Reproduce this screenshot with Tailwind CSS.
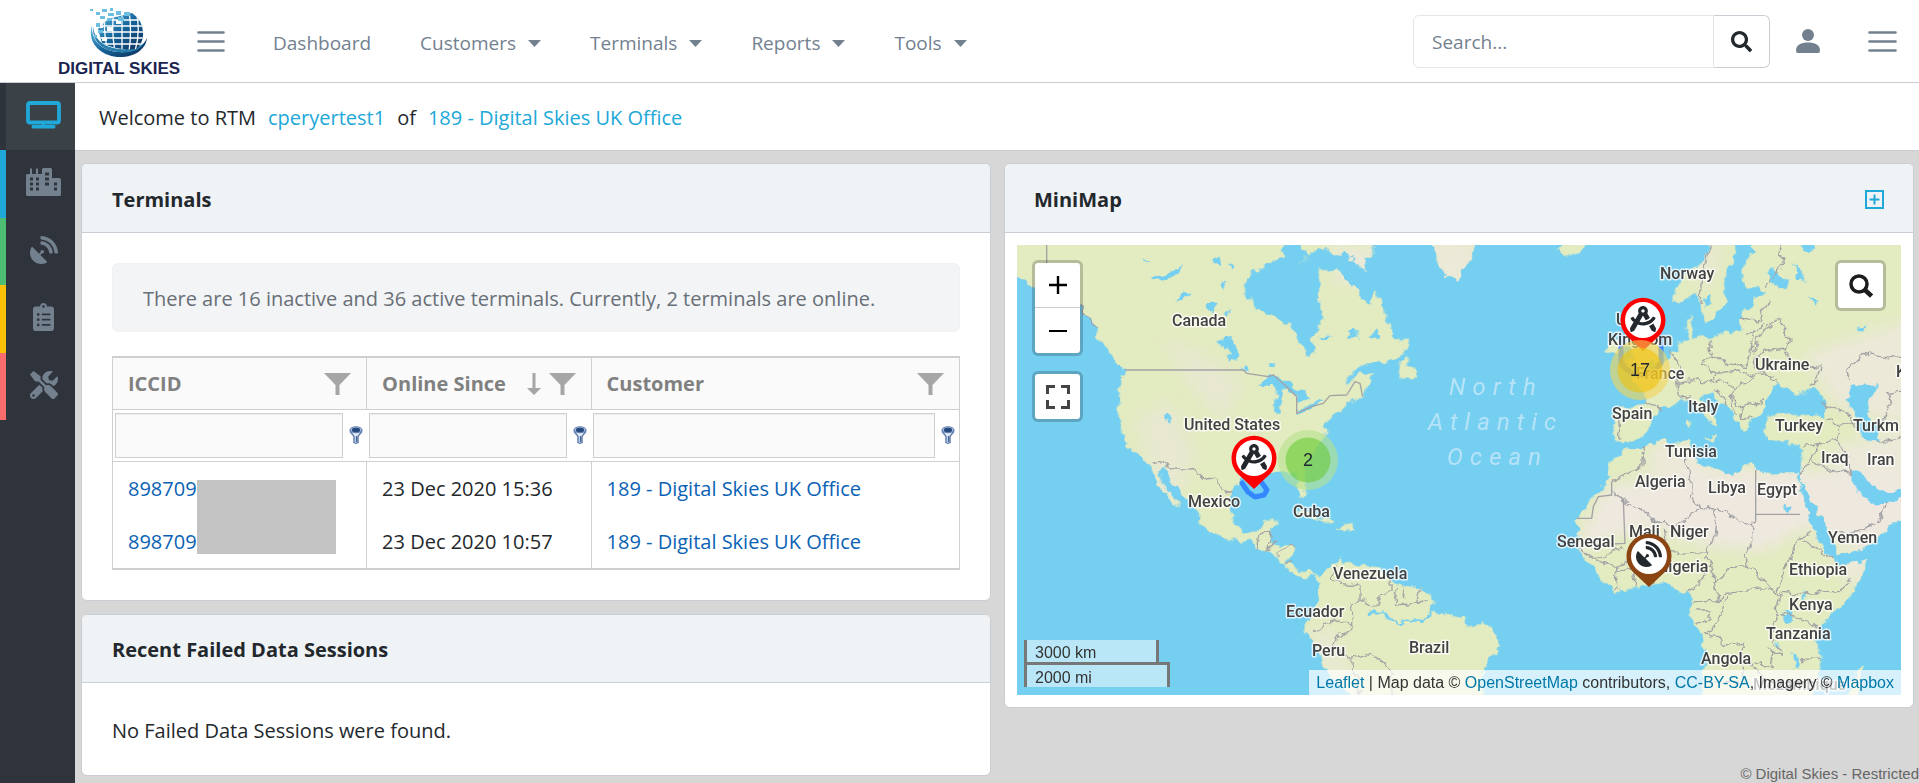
<!DOCTYPE html>
<html lang="en">
<head>
<meta charset="utf-8">
<title>Digital Skies RTM</title>
<script src="https://cdn.jsdelivr.net/npm/@tailwindcss/browser@4"></script>
</head>
<body class="flex h-screen flex-col overflow-hidden bg-[#d7d7d7] font-['Open_Sans','Noto_Sans',sans-serif] text-[20px] leading-[30px] text-[#23282c]">

<svg class="hidden" aria-hidden="true">
  <symbol id="i-search" viewBox="0 0 512 512"><path d="M505 442.7L405.3 343c-4.500-4.500-10.600-7-17-7H372c27.600-35.300 44-79.700 44-128C416 93.100 322.900 0 208 0S0 93.100 0 208s93.100 208 208 208c48.300 0 92.700-16.400 128-44v16.300c0 6.400 2.500 12.500 7 17l99.700 99.700c9.400 9.400 24.600 9.400 33.900 0l28.300-28.300c9.400-9.400 9.400-24.600.1-34zM208 336c-70.700 0-128-57.200-128-128 0-70.700 57.200-128 128-128 70.700 0 128 57.200 128 128 0 70.700-57.200 128-128 128z"/></symbol>
  <symbol id="i-dish" viewBox="0 0 512 512"><path d="M305.450,462.590c7.390,7.300,6.190,20.100-3,25-77.710,41.800-176.720,29.910-242.340-35.710C-5.500,386.280-17.400,287.360,24.410,209.550c4.890-9.100,17.690-10.300,25-3L166.230,323.370l27.390-27.390c-.69-2.610-1.590-5-1.590-7.820a32,32,0,1,1,32,32.010c-2.800,0-5.200-.89-7.800-1.600l-27.410,27.410ZM511.980,303.070a16.100,16.100,0,0,1-16,17H463.860a15.970,15.970,0,0,1-15.890-15C440.470,175.550,336.450,70.530,207.030,63.530a15.840,15.840,0,0,1-15-15.910V16.030A16.090,16.090,0,0,1,209.030.020C372.250,8.620,503.470,139.840,511.980,303.070Zm-96.020-.3a16.210,16.210,0,0,1-16.110,17.300H367.640a16.070,16.070,0,0,1-15.890-14.700c-6.910-77.010-68.120-138.910-144.920-145.220a15.940,15.940,0,0,1-14.800-15.900V112.130a16.130,16.130,0,0,1,17.300-16.090C319.450,104.540,407.560,192.650,415.960,302.770Z"/></symbol>
  <symbol id="i-compass" viewBox="0 0 512 512"><path d="M457.010 344.420c-25.050 20.330-52.630 37.180-82.540 49.050l54.380 94.190 53.950 23.040c9.810 4.190 20.890-2.210 22.170-12.800l7.020-58.250-54.980-95.230zm42.490-94.560c4.860-7.670 1.890-17.990-6.050-22.390l-28.070-15.570c-7.480-4.150-16.610-1.460-21.260 5.720C403.010 281.150 332.250 320 256 320c-23.930 0-47.230-4.250-69.410-11.530l67.360-116.680c.7.020 1.340.21 2.040.21s1.350-.19 2.040-.21l51.090 88.500c31.230-8.960 59.560-25.750 82.610-48.920l-51.790-89.710C347.390 128.030 352 112.630 352 96c0-53.020-42.980-96-96-96s-96 42.980-96 96c0 16.630 4.610 32.030 12.050 45.660l-68.300 118.310c-12.550-11.610-23.960-24.590-33.680-39-4.790-7.100-13.970-9.620-21.380-5.330l-27.750 16.070c-7.850 4.540-10.630 14.900-5.640 22.470 15.570 23.640 34.690 44.210 55.980 62.020L0 439.660l7.020 58.250c1.280 10.590 12.360 16.990 22.170 12.800l53.950-23.040 70.800-122.630C186.130 377.280 220.620 384 256 384c99.050 0 190.880-51.010 243.500-134.140zM256 64c17.670 0 32 14.330 32 32s-14.330 32-32 32-32-14.330-32-32 14.330-32 32-32z"/></symbol>
  <symbol id="i-funnel" viewBox="0 0 27 22"><path fill="#a6a6a6" d="M0 0H27L15.500 12V22H11.500V12Z"/></symbol>
  <symbol id="i-filter" viewBox="0 0 14 18"><path d="M1 4.500C1.500 8 5 8.500 5 11V16.500Q7 18 9 16.500V11C9 8.500 12.500 8 13 4.500" fill="#e6eef8" stroke="#5f7dac" stroke-width="1.500"/><ellipse cx="7" cy="3.800" rx="6" ry="3" fill="#a9bfdd" stroke="#5f7dac"/><ellipse cx="7" cy="4" rx="4.200" ry="2.200" fill="#274a80"/><path d="M7.500 10V16" stroke="#47689c" stroke-width="1.500"/></symbol>
  <symbol id="i-menu" viewBox="0 0 28 24"><path d="M1.500 3.500H26.500M1.500 12.500H26.500M1.500 21.500H26.500" stroke="#73818f" stroke-width="2.600" stroke-linecap="round"/></symbol>
  <symbol id="i-pin" viewBox="0 0 46 54"><path d="M23 54L7 39A22.500 22.500 0 1 1 39 39Z"/><circle cx="23" cy="23" r="18" fill="#fff"/></symbol>
</svg>

<header class="flex h-[83px] shrink-0 items-center border-b border-[#c8ced3] bg-white pr-[22px] text-[#73818f]">
  <a href="#" class="ml-[58px] flex w-[122px] flex-col items-center gap-px pt-0.5 text-[#1b2450]" aria-label="Digital Skies">
    <svg class="h-[53px] w-[62px]" viewBox="0 0 62 53">
      <defs>
        <linearGradient id="lg" x1="0" y1="0" x2="1" y2="1"><stop offset="0" stop-color="#63bfe3"/><stop offset=".5" stop-color="#14639a"/><stop offset="1" stop-color="#0f2a52"/></linearGradient>
        <clipPath id="globe"><path d="M20 12L44 6Q56 14 55 29Q54 38 48 42Q30 44 14 36L10 22Z"/></clipPath>
      </defs>
      <path d="M4 18C-1 34 10 48 29 50C47 51 58 42 59 31C54 42 43 46 30 45C14 44 3 34 4 18Z" fill="url(#lg)"/>
      <path d="M5 19C6 34 18 41 32 42C43 43 52 40 57 35C51 45 40 46 30 45C15 44 4 35 5 19Z" fill="#2a7fae"/>
      <g clip-path="url(#globe)"><rect x="8" y="4" width="50" height="40" fill="url(#lg)"/><path d="M8 13H58M8 19H58M8 25H58M8 31H58M8 37H58M18 4Q14 24 20 44M26 4Q23 24 27 44M34 4V44M41 4Q44 24 41 44M48 4Q53 24 47 44" stroke="#fff" stroke-width="1.300" fill="none"/><path d="M8 15h7v6H8zM19 20h6v4h-6zM28 13h5v4h-5zM14 30h5v4h-5z" fill="#fff"/></g>
      <path d="M2 2h3v2H2zM8 5h4v3H8zM14 2h5v3h-5zM22 1h3v3h-3zM20 6h6v3h-6zM28 4h5v4h-5zM36 5h6v4h-6zM12 9h5v3h-5zM19 11h5v3h-5zM30 10h6v4h-6zM8 16h4v4H8zM10 23h5v3h-5zM6 28h3v3H6z" fill="#6cbfe0"/>
    </svg>
    <span class="font-['Liberation_Sans',sans-serif] text-[17px] leading-[16px] font-bold whitespace-nowrap">DIGITAL SKIES</span>
  </a>
  <button type="button" class="ml-4" aria-label="Toggle sidebar"><svg class="h-6 w-[30px]"><use href="#i-menu"/></svg></button>
  <nav class="ml-[47px] flex gap-[49px] pt-1 text-[19px]">
    <a href="#">Dashboard</a>
    <a href="#" class="flex items-center gap-3">Customers<svg class="h-[7px] w-[13px] fill-[#73818f]" viewBox="0 0 13 7"><path d="M0 0H13L6.500 7Z"/></svg></a>
    <a href="#" class="flex items-center gap-3">Terminals<svg class="h-[7px] w-[13px] fill-[#73818f]" viewBox="0 0 13 7"><path d="M0 0H13L6.500 7Z"/></svg></a>
    <a href="#" class="flex items-center gap-3">Reports<svg class="h-[7px] w-[13px] fill-[#73818f]" viewBox="0 0 13 7"><path d="M0 0H13L6.500 7Z"/></svg></a>
    <a href="#" class="flex items-center gap-3">Tools<svg class="h-[7px] w-[13px] fill-[#73818f]" viewBox="0 0 13 7"><path d="M0 0H13L6.500 7Z"/></svg></a>
  </nav>
  <form class="ml-auto flex h-[53px]">
    <input type="text" aria-label="Search" placeholder="Search..." class="w-[301px] rounded-l-md border border-[#e4e7ea] px-[18px] pt-0.5 text-[19px] placeholder:text-[#73818f]">
    <button type="button" aria-label="Search" class="flex w-[56px] items-center justify-center rounded-r-md border border-l-0 border-[#c8ced3] text-[#23282c]"><svg class="size-[21px] fill-current"><use href="#i-search"/></svg></button>
  </form>
  <button type="button" class="ml-[26px]" aria-label="Account"><svg class="size-6 fill-[#73818f]" viewBox="0 0 24 24"><circle cx="12" cy="6" r="6"/><path d="M0 21.500C0 16 5 13.500 12 13.500S24 16 24 21.500Q24 24 22 24H2Q0 24 0 21.500Z"/></svg></button>
  <button type="button" class="ml-12" aria-label="Toggle aside menu"><svg class="h-6 w-[29px]" viewBox="0 0 29 24"><path d="M1.500 3.500H27.500M1.500 12.500H27.500M1.500 21.500H27.500" stroke="#73818f" stroke-width="2.600" stroke-linecap="round"/></svg></button>
</header>

<div class="flex min-h-0 flex-1">
  <aside class="w-[75px] shrink-0 bg-[#2f343c] text-[#73818f]">
    <nav class="flex flex-col">
      <a href="#" aria-label="Dashboard" class="flex h-[67px] items-center justify-center border-l-6 border-[#2f343c] bg-[#3a4248] pb-1 pl-[6px] text-[#20a8d8]">
        <svg class="h-7 w-[35px]" viewBox="0 0 35 28"><rect x="2" y="2" width="31" height="19.500" rx="2" fill="none" stroke="currentColor" stroke-width="3.800"/><path d="M16 21h3v3H16zM7 24h21q1.500 0 1.500 1.800t-1.500 1.800H7q-1.500 0-1.500-1.800T7 24z" fill="currentColor"/></svg>
      </a>
      <a href="#" aria-label="Customers" class="flex h-[68px] items-center justify-center border-l-6 border-[#20a8d8] pb-1 pl-[6px]">
        <svg class="h-7 w-[35px] fill-current" viewBox="0 0 35 28" fill-rule="evenodd"><path d="M1.500 6H4V.5H6V6H10V.5H12V6H16V1.500Q16 0 17.500 0H24.500Q26 0 26 1.500V10H33Q35 10 35 12V26.500Q35 28 33.500 28H1.500Q0 28 0 26.500V7.500Q0 6 1.500 6ZM4 9.500v3h3v-3zM10 9.500v3h3v-3zM4 14.500v3h3v-3zM10 14.500v3h3v-3zM4 19.500v3h3v-3zM10 19.500v3h3v-3zM19 4.500v3h4v-3zM19 9.500v3h4v-3zM19 14.500v3h4v-3zM28 14.500v3h3v-3zM28 19.500v3h3v-3z"/></svg>
      </a>
      <a href="#" aria-label="Terminals" class="flex h-[67px] items-center justify-center border-l-6 border-[#4dbd74] pb-1 pl-[6px]"><svg class="size-7 fill-current"><use href="#i-dish"/></svg></a>
      <a href="#" aria-label="Reports" class="flex h-[68px] items-center justify-center border-l-6 border-[#ffc107] pb-1 pl-[6px]">
        <svg class="h-7 w-[21px] fill-current" viewBox="0 0 384 512"><path d="M336 64h-80c0-35.300-28.700-64-64-64s-64 28.700-64 64H48C21.500 64 0 85.500 0 112v352c0 26.500 21.500 48 48 48h288c26.500 0 48-21.500 48-48V112c0-26.500-21.500-48-48-48zM96 424c-13.300 0-24-10.700-24-24s10.700-24 24-24 24 10.700 24 24-10.700 24-24 24zm0-96c-13.300 0-24-10.700-24-24s10.700-24 24-24 24 10.700 24 24-10.700 24-24 24zm0-96c-13.300 0-24-10.700-24-24s10.700-24 24-24 24 10.700 24 24-10.700 24-24 24zm96-192c13.300 0 24 10.700 24 24s-10.700 24-24 24-24-10.700-24-24 10.700-24 24-24zm128 368c0 4.400-3.600 8-8 8H168c-4.400 0-8-3.600-8-8v-16c0-4.400 3.600-8 8-8h144c4.400 0 8 3.600 8 8v16zm0-96c0 4.400-3.600 8-8 8H168c-4.400 0-8-3.600-8-8v-16c0-4.400 3.600-8 8-8h144c4.400 0 8 3.600 8 8v16zm0-96c0 4.400-3.600 8-8 8H168c-4.400 0-8-3.600-8-8v-16c0-4.400 3.600-8 8-8h144c4.400 0 8 3.600 8 8v16z"/></svg>
      </a>
      <a href="#" aria-label="Tools" class="flex h-[67px] items-center justify-center border-l-6 border-[#f86c6b] pb-1 pl-[6px]">
        <svg class="size-7 fill-current" viewBox="0 0 512 512"><path transform="matrix(-1 0 0 1 512 0)" d="M64 0L0 0z"/><path d="M501.100 395.700L384 278.600c-23.100-23.100-57.600-27.600-85.400-13.900L192 158.100V96L64 0 0 64l96 128h62.100l106.600 106.600c-13.600 27.800-9.200 62.300 13.900 85.400l117.100 117.100c14.600 14.600 38.200 14.600 52.700 0l52.700-52.700c14.500-14.600 14.500-38.200 0-52.700zM331.700 225c28.300 0 54.900 11 74.900 31l19.400 19.400c15.800-6.900 30.800-16.500 43.800-29.500 37.100-37.100 49.700-89.300 37.900-136.700-2.200-9-13.500-12.100-20.100-5.500l-74.400 74.400-67.900-11.300L334 98.900l74.400-74.400c6.600-6.600 3.400-17.900-5.700-20.200-47.400-11.700-99.600.9-136.600 37.900-28.500 28.500-41.900 66.100-41.200 103.600l82.100 82.100c8.100-1.900 16.500-2.900 24.700-2.900zm-103.900 82l-56.700-56.700L18.700 402.800c-25 25-25 65.500 0 90.500s65.500 25 90.500 0l123.600-123.600c-7.600-19.900-9.900-41.600-5-62.700zM64 472c-13.200 0-24-10.800-24-24 0-13.300 10.700-24 24-24s24 10.700 24 24c0 13.200-10.700 24-24 24z"/></svg>
      </a>
    </nav>
  </aside>

  <main class="flex min-w-0 flex-1 flex-col">
    <div class="flex h-[68px] shrink-0 items-center gap-3 border-b border-[#c8ced3] bg-white pt-0.5 pl-6">
      <span>Welcome to RTM</span><a href="#" class="text-[#20a8d8]">cperyertest1</a><span>of</span><a href="#" class="text-[#20a8d8]">189 - Digital Skies UK Office</a>
    </div>

    <div class="grid grid-cols-2 items-start gap-[13px] pt-3 pr-[5px] pl-[6px]">
      <div class="flex flex-col gap-[13px]">
        <section class="overflow-hidden rounded-md border border-[#c8ced3] bg-white">
          <h2 class="flex h-[69px] items-center border-b border-[#c8ced3] bg-[#eff3f6] px-[30px] pt-[3px] font-bold">Terminals</h2>
          <div class="px-[30px] pt-[30px] pb-[30px]">
            <p class="mb-6 flex h-[69px] items-center rounded-md border border-[#f0f1f3] bg-[#f3f4f6] px-[30px] pt-0.5 text-[#686f77]">There are 16 inactive and 36 active terminals. Currently, 2 terminals are online.</p>
            <table class="w-full table-fixed border-collapse border-x border-y-2 border-[#cfcfcf] text-left">
              <colgroup><col class="w-[30%]"><col class="w-[26.500%]"><col></colgroup>
              <thead class="text-[#808080]">
                <tr class="h-[52px] border-b border-[#cfcfcf] bg-[#fafafa]">
                  <th class="border-r border-[#cfcfcf] px-[15px] pt-0.5"><div class="flex items-center justify-between">ICCID<svg class="h-[22px] w-[27px]"><use href="#i-funnel"/></svg></div></th>
                  <th class="border-r border-[#cfcfcf] px-[15px] pt-0.5"><div class="flex items-center gap-2"><span class="mr-auto whitespace-nowrap">Online Since</span><svg class="h-[22px] w-[14px] shrink-0 fill-[#a6a6a6]" viewBox="0 0 14 22"><path d="M5.500 0H8.500V15H14L7 22L0 15H5.500Z"/></svg><svg class="h-[22px] w-[27px] shrink-0"><use href="#i-funnel"/></svg></div></th>
                  <th class="px-[15px] pt-0.5"><div class="flex items-center justify-between">Customer<svg class="h-[22px] w-[27px]"><use href="#i-funnel"/></svg></div></th>
                </tr>
                <tr class="h-[52px] border-b border-[#cfcfcf]">
                  <td class="pr-1 pl-[2px]"><div class="flex items-center gap-[6px]"><input type="text" aria-label="Filter ICCID" class="h-[45px] min-w-0 flex-1 border border-[#cfcfcf] bg-[#fafafa] px-2 inset-shadow-xs"><svg class="h-[18px] w-[14px]"><use href="#i-filter"/></svg></div></td>
                  <td class="pr-1 pl-[2px]"><div class="flex items-center gap-[6px]"><input type="text" aria-label="Filter Online Since" class="h-[45px] min-w-0 flex-1 border border-[#cfcfcf] bg-[#fafafa] px-2 inset-shadow-xs"><svg class="h-[18px] w-[14px]"><use href="#i-filter"/></svg></div></td>
                  <td class="pr-1 pl-[2px]"><div class="flex items-center gap-[6px]"><input type="text" aria-label="Filter Customer" class="h-[45px] min-w-0 flex-1 border border-[#cfcfcf] bg-[#fafafa] px-2 inset-shadow-xs"><svg class="h-[18px] w-[14px]"><use href="#i-filter"/></svg></div></td>
                </tr>
              </thead>
              <tbody>
                <tr class="h-[54px]">
                  <td class="relative border-r border-[#cfcfcf] px-[15px] pt-0.5"><a href="#" class="text-[#0b62b5]">898709</a><span class="absolute top-[18px] left-[84px] z-10 h-[74px] w-[139px] bg-[#c3c3c3]"></span></td>
                  <td class="border-r border-[#cfcfcf] px-[15px] pt-0.5">23 Dec 2020 15:36</td>
                  <td class="px-[15px] pt-0.5"><a href="#" class="text-[#0b62b5]">189 - Digital Skies UK Office</a></td>
                </tr>
                <tr class="h-[54px]">
                  <td class="border-r border-[#cfcfcf] px-[15px]"><a href="#" class="text-[#0b62b5]">898709</a></td>
                  <td class="border-r border-[#cfcfcf] px-[15px]">23 Dec 2020 10:57</td>
                  <td class="px-[15px]"><a href="#" class="text-[#0b62b5]">189 - Digital Skies UK Office</a></td>
                </tr>
              </tbody>
            </table>
          </div>
        </section>

        <section class="overflow-hidden rounded-md border border-[#c8ced3] bg-white">
          <h2 class="flex h-[68px] items-center border-b border-[#c8ced3] bg-[#eff3f6] px-[30px] pt-[3px] font-bold">Recent Failed Data Sessions</h2>
          <p class="px-[30px] pt-8 pb-7 leading-8">No Failed Data Sessions were found.</p>
        </section>
      </div>

      <section class="overflow-hidden rounded-md border border-[#c8ced3] bg-white">
        <div class="flex h-[69px] items-center justify-between border-b border-[#c8ced3] bg-[#eff3f6] px-[29px] pt-[3px]">
          <h2 class="font-bold">MiniMap</h2>
          <button type="button" aria-label="Expand map"><svg class="size-[19px]" viewBox="0 0 19 19"><path d="M1 1H18V18H1ZM9.500 4.500V14.500M4.500 9.500H14.500" fill="none" stroke="#20a8d8" stroke-width="2"/></svg></button>
        </div>
        <div class="p-3">
          <div class="relative h-[450px] overflow-hidden bg-[#75cff0] font-['Liberation_Sans',sans-serif]">
            <svg class="absolute inset-0 h-full w-full" viewBox="0 0 884 450" preserveAspectRatio="xMidYMid slice">
              <defs>
                <filter id="coast" filterUnits="userSpaceOnUse" x="0" y="0" width="2700" height="1400" color-interpolation-filters="sRGB"><feTurbulence type="fractalNoise" baseFrequency=".035" numOctaves="3" seed="4"/><feDisplacementMap in="SourceGraphic" scale="30" xChannelSelector="R" yChannelSelector="G"/></filter>
                <filter id="soft" x="-20%" y="-20%" width="140%" height="140%"><feGaussianBlur stdDeviation="22"/></filter>
                <clipPath id="land">
                  <path d="M-20-20V112L45 115 60 130 75 150 210 190 225 225 255 245 258 290 275 300 290 330 310 355 330 370 345 395 345 415 335 405 330 470 328 540 340 590 350 620 380 640 415 675 425 690 440 720 455 750 475 775 490 800 512 805 500 785 480 760 455 725 447 690 460 680 475 700 490 740 520 760 540 790 570 820 572 855 600 875 640 890 680 905 715 900 740 920 780 935 800 950 825 975 850 1005 885 1015 910 1005 930 1030 925 1010 900 990 870 1000 850 975 825 965 845 950 850 920 790 915 780 905 780 875 800 855 795 835 765 840 755 865 740 875 700 875 670 845 660 800 665 770 680 735 700 715 730 700 790 700 840 695 860 700 865 740 880 775 890 760 885 720 880 690 900 650 930 610 950 580 945 550 960 535 1010 500 1030 480 1060 470 1065 440 1085 420 1090 400 1050 400 1020 425 1010 430 1030 395 1070 370 1120 365 1160 355 1190 335 1200 300 1150 290 1145 260 1120 220 1115 180 1090 150 1085 190 1055 180 1045 150 1020 130 1010 115 975 90 950 95 925 85 920 110 930 150 920 170 940 230 930 260 910 290 910 345 890 345 865 310 860 270 810 240 780 220 735 215 730 180 705 175 705 130 730 95 760 80 800 60 830 45 815 30 810-20Z"/>
                  <path d="M850-20L870 25 900 45 860 80 880 60 930 20 980 50 1000 30 1050 80 1068 90 1060 50 1085 50 1090-20ZM1165 410L1170 370 1195 345 1190 380 1220 390 1225 410ZM1265-20V15L1280 60 1300 100 1345 125 1355 80 1385 50 1395-20ZM1635 35L1670-10H1740L1710 40 1680 50Z"/>
                  <path d="M925 1010L955 980 1000 955 1000 975 1020 970 1060 975 1110 985 1140 1020 1185 1040 1230 1040 1255 1060 1272 1095 1265 1120 1320 1120 1350 1130 1370 1150 1430 1155 1465 1185 1467 1220 1440 1260 1420 1290 1410 1400H1035L1010 1350 960 1310 935 1270 915 1220 880 1175 890 1145 910 1110 925 1080 930 1030Z"/>
                  <path d="M1845 625L1830 640 1795 670 1790 700 1800 710 1770 750 1730 790 1700 840 1710 900 1700 920 1715 940 1750 985 1770 1020 1820 1057 1880 1045 1950 1030 1975 1030 2010 1055 2030 1055 2045 1085 2035 1135 2060 1160 2075 1195 2085 1230 2090 1260 2075 1300 2080 1400H2400L2430 1320 2430 1250 2420 1190 2440 1155 2480 1110 2530 1050 2560 1000 2570 960 2530 970 2480 975 2460 955 2440 920 2420 890 2400 840 2385 800 2370 740 2360 700 2330 700 2270 695 2240 690 2235 670 2200 670 2170 710 2130 690 2080 680 2050 650 2045 600 2000 605 1950 600 1895 625ZM2510 1400L2525 1330 2555 1275 2545 1400Z"/>
                  <path d="M1805 560L1815 500 1900 500 1905 470 1890 440 1860 415 1900 400 1950 370 1990 340 2010 310 2040 295 2030 260 2040 225 2045 260 2050 295 2100 290 2150 280 2190 270 2190 240 2210 200 2230 210 2230 170 2270 160 2240 145 2210 140 2190 90 2230 40 2230-20H2720V840H2673L2650 850 2600 900 2540 930 2480 945 2450 870 2430 830 2400 770 2370 720 2375 640 2370 610 2320 605 2270 600 2260 560 2280 530 2330 520 2400 525 2445 530 2450 500 2420 440 2400 450 2360 460 2340 445 2300 430 2290 440 2270 490 2260 520 2220 540 2200 575 2175 545 2165 510 2130 490 2110 460 2075 465 2090 500 2120 530 2125 560 2100 545 2070 510 2040 480 1990 490 1960 500 1930 530 1915 570 1870 600 1845 610 1815 600ZM2105-20L2090 50 2040 95 2000 140 1990 180 2010 190 2060 160 2070 200 2085 250 2110 240 2150 180 2140 120 2170 60 2190-20ZM1850 200L1880 190 1900 230 1930 290 1960 320 1950 360 1900 375 1850 380 1870 350 1850 300 1840 240ZM1790 330L1795 300 1830 290 1840 320 1820 345ZM2080 590L2120 590 2110 605ZM2028 540L2040 540 2038 565 2030 565ZM925 842L970 840 975 850 940 852ZM985 860L1030 855 1040 868 1000 875ZM850 815L880 805 920 830 960 840 900 835Z"/>
                </clipPath>
              </defs>
              <g transform="translate(-7 -5) scale(.33333)">
                <g filter="url(#coast)">
                  <g clip-path="url(#land)">
                    <rect x="-20" y="-20" width="2760" height="1440" fill="#e3ebc0"/>
                    <g filter="url(#soft)" fill="#eee8df">
                      <path d="M1680 940L1790 740 2050 690 2420 690 2700 700V860L2560 930 2380 860 2280 930 2100 920 1900 860Z"/>
                      <path d="M450 290L560 330 700 420 640 560 540 440ZM370 540L480 480 560 640 470 860 420 700Z" opacity=".5"/>
                      <path d="M950 20H1100V130H980ZM1250 0H1400V130H1280ZM1930 600L2100 620 2080 700 1900 700ZM2460 620L2700 560V720H2480ZM2380 340L2700 240V560L2480 500ZM2450 940L2600 930 2550 1060Z" opacity=".8"/>
                      <path d="M900 1180L960 1160 1060 1370 980 1370ZM2050 40L2150 0 2080 160Z" opacity=".6"/>
                    </g>
                  </g>
                  <path fill="#75cff0" d="M740 435L780 405 830 420 860 450 890 455 895 475 865 490 850 465 820 445 812 520 797 525 795 480 800 450 790 435ZM855 525L900 490 940 482 905 508ZM775 370L792 370 790 385 775 383ZM697 378H712V395H697ZM625 295L660 290 690 345 685 360 660 365 655 330 630 320ZM420 110L470 105 520 68 505 100 460 125 425 120ZM497 180L520 153 542 168 512 182ZM590 185L620 190 610 225 595 205ZM610 55L632 50 625 78 610 72ZM655 70H675V85H660ZM635 130L652 125 645 155ZM398 52L418 62 400 65ZM470 525L485 535 480 545 468 538ZM925 290L970 290 950 300 925 300ZM1015 270L1038 270 1045 300 1020 295ZM1080 290L1092 270 1110 290ZM642 215L660 205 655 225ZM2530 440L2600 430 2590 470 2570 500 2580 530 2610 570 2610 605 2560 600 2550 560 2530 510 2510 480ZM2530 690L2550 700 2590 740 2640 760 2700 750V775L2640 780 2600 795 2560 775 2530 730ZM2265 100L2290 80 2310 110 2340 120 2325 150 2300 140ZM2355 75L2375 90 2380 125 2360 110ZM2370 15H2410L2400 40ZM2395 170L2415 180 2410 195ZM2320 1115L2350 1110 2350 1145 2325 1150ZM2320 795L2345 800 2330 820ZM2540 260L2570 255 2545 272ZM2075 180L2105 165 2100 195 2085 200ZM2375 1050L2390 1080 2380 1090ZM2300 1195L2315 1225 2305 1225ZM2350 1240L2360 1240 2365 1290 2355 1290Z"/>
                  <path fill="none" stroke="#75cff0" stroke-width="7" d="M1070 1115L1120 1120 1160 1150 1230 1140 1270 1112"/>
                </g>
                <g fill="none" stroke="#a3a2a5" stroke-width="4" stroke-linejoin="round">
                  <path d="M345 390H700L710 400 775 410 790 405 830 440 860 470 860 520 905 500 940 490 960 467 1010 465 1035 425 1050 430 1058 470M110-10V70M2237 690V845M2237 823H2370M1840 780L1845 910 1750 915M1700 835H1745L1750 800 1765 770 1805 765V725"/>
                  <g filter="url(#coast)">
                    <path d="M425 668L450 668 490 690 530 690 550 685 580 720 600 715 620 720 650 760 670 765M210 185L225 225 250 245 258 270M740 925L745 895 760 880 785 880 770 930 800 905M800 945L830 925 850 920M825 970L850 965"/>
                    <path d="M985 975L965 1010 990 1030 1050 1035 1050 1080 1090 1100 1140 1050 1140 1020M1160 1035L1150 1060 1160 1095 1220 1090 1250 1080M1185 1040L1180 1080M1230 1040L1220 1090M1050 1080L1025 1095 1025 1160 970 1140 910 1175M1025 1165L980 1190 970 1220 1020 1255 1080 1240 1110 1260 1140 1300 1145 1400M1020 1255L1060 1380"/>
                    <path d="M1900 620L1895 680 1805 725M1805 755L1950 850 2000 855 2070 805 2045 770 2040 690 2020 640M2237 845L2225 855 2120 805 2110 810 2070 805M2225 855V905L2205 950 2220 985 2235 990 2290 1055 2390 1065 2430 1055 2490 1055 2530 1010M2110 810L2120 850 2115 890 2090 935 2110 1000 2125 1080M1840 780H1860M1960 870L1970 930 2000 940 2090 935M2100 970L2065 1030 2030 1055M2040 1085H2120L2150 1060 2270 1045 2310 1065 2300 1120 2290 1200 2320 1240 2280 1230 2290 1280 2200 1260 2195 1210 2140 1215 2130 1190 2080 1185 2120 1160 2150 1070M2345 1125L2440 1170M2295 1125H2345M2300 1065L2320 1000 2340 960 2360 900 2400 880M2380 900L2440 940 2465 960M2220 980L2160 990 2110 1030M1710 925L1760 960 1820 980 1820 1050M1820 990L1880 985 1875 1045M1930 1035L1920 980 1960 930M1760 960L1840 920M1920 980L1860 960 1820 980M2060 1110L2100 1110 2100 1140 2060 1150M2200 1270V1330L2100 1330M2370 1260L2430 1255M2220 1260L2270 1330"/>
                    <path d="M2100 295L2105 340 2130 365 2200 380 2220 350 2230 280M2070 370L2120 400 2100 430 2060 420 2000 430M2070 370L2105 345M2120 400L2180 390 2230 410M2240 340L2330 330 2340 365 2430 380 2420 420 2400 440M2240 340L2230 380 2270 400 2300 430M2270 400L2240 405 2180 440 2130 420 2100 430M2180 440L2160 470 2200 500 2265 480M2110 450L2150 470 2145 500M2230 340L2240 300 2270 265 2310 240 2340 300 2330 330M2190 235L2250 240 2275 180M2205 280L2240 270 2265 250M2070 190L2075 100 2095 40 2110-10M2305-10L2320 70 2270 140M2450 530L2490 560 2480 600 2430 610 2380 620M2490 560L2540 545M2520 420L2510 390 2560 340 2640 355 2700 350M2430 490L2510 520 2540 560M2430 610L2400 660 2370 710M2400 660L2460 690 2530 700 2510 650 2480 600M1980 330L2010 380 2000 430 2010 480M1900 490L1960 510M1825 520L1830 600M2600 605L2700 590M2480 880L2560 870 2620 830 2630 780M2160 470L2180 530M2200 500L2190 540 2230 530M2010 480L2040 470M2620 540L2640 500 2630 460 2700 450"/>
                  </g>
                </g>
              </g>
              <g fill="none" stroke="#3388ff" stroke-width="5" stroke-linejoin="round" stroke-linecap="round"><path d="M225 238L231 247 238 252 247 250 250 245 245 238"/><path d="M604 92V118Q612 130 624 130T644 118V92"/></g>
              <g class="fill-[#424242] font-['Roboto',sans-serif] text-[16px] font-medium [paint-order:stroke]" stroke="#fff" stroke-opacity=".75" stroke-width="3" stroke-linejoin="round">
                <text x="155" y="81">Canada</text><text x="167" y="185">United States</text><text x="171" y="262">Mexico</text><text x="276" y="272">Cuba</text><text x="316" y="334">Venezuela</text><text x="269" y="372">Ecuador</text><text x="295" y="411">Peru</text><text x="392" y="408">Brazil</text>
                <text x="643" y="34">Norway</text><text x="599" y="80">United</text><text x="591" y="100">Kingdom</text><text x="619" y="134">France</text><text x="595" y="174">Spain</text><text x="671" y="167">Italy</text><text x="738" y="125">Ukraine</text><text x="758" y="186">Turkey</text><text x="836" y="186">Turkm</text><text x="879" y="132">K</text><text x="648" y="212">Tunisia</text><text x="804" y="218">Iraq</text><text x="850" y="220">Iran</text>
                <text x="618" y="242">Algeria</text><text x="691" y="248">Libya</text><text x="740" y="250">Egypt</text><text x="540" y="302">Senegal</text><text x="612" y="292">Mali</text><text x="653" y="292">Niger</text><text x="640" y="327">Nigeria</text><text x="811" y="298">Yemen</text><text x="772" y="330">Ethiopia</text><text x="772" y="365">Kenya</text><text x="749" y="394">Tanzania</text><text x="684" y="419">Angola</text><text x="736" y="445">Mozambique</text>
              </g>
              <g class="fill-[#b7e3f8] font-['Roboto',sans-serif] text-[24px] tracking-[7px] italic"><text x="432" y="150">North</text><text x="411" y="185">Atlantic</text><text x="430" y="220">Ocean</text></g>
              <g text-anchor="middle" class="text-[18px]">
                <use href="#i-pin" x="214" y="190" width="46" height="54" fill="#f00"/><use href="#i-compass" x="224" y="199" width="26" height="26" fill="#23282c"/>
                <use href="#i-pin" x="603" y="52" width="46" height="54" fill="#f00"/><use href="#i-compass" x="613" y="61" width="26" height="26" fill="#23282c"/>
                <use href="#i-pin" x="609" y="288" width="46" height="54" fill="#8b4513"/><use href="#i-dish" x="619" y="296" width="26" height="26" fill="#23282c"/>
                <circle cx="291" cy="215" r="30" fill="#b5e28c" fill-opacity=".6"/><circle cx="291" cy="215" r="22.500" fill="#6ecc39" fill-opacity=".6"/><text x="291" y="221" fill="#23282c">2</text>
                <circle cx="623" cy="125" r="30" fill="#f1d357" fill-opacity=".6"/><circle cx="623" cy="125" r="22.500" fill="#f0c20c" fill-opacity=".6"/><text x="623" y="131" fill="#23282c">17</text>
              </g>
            </svg>

            <div class="absolute top-[15px] left-[15px] flex flex-col gap-[15px]">
              <div class="flex flex-col overflow-hidden rounded-md border-3 border-black/20 bg-white bg-clip-padding">
                <button type="button" aria-label="Zoom in" class="flex size-[45px] items-center justify-center border-b border-[#ccc]"><svg class="size-[18px]" viewBox="0 0 18 18"><path d="M9 0V18M0 9H18" stroke="#000" stroke-width="2.400"/></svg></button>
                <button type="button" aria-label="Zoom out" class="flex size-[45px] items-center justify-center"><svg class="size-[18px]" viewBox="0 0 18 18"><path d="M0 9H18" stroke="#000" stroke-width="2"/></svg></button>
              </div>
              <button type="button" aria-label="Full screen" class="flex size-[51px] items-center justify-center rounded-md border-3 border-black/20 bg-white bg-clip-padding"><svg class="size-6" viewBox="0 0 24 24"><path d="M1.500 9V1.500H9M15 1.500H22.500V9M22.500 15V22.500H15M9 22.500H1.500V15" fill="none" stroke="#444" stroke-width="3"/></svg></button>
            </div>
            <button type="button" aria-label="Search map" class="absolute top-[15px] right-[15px] flex size-[51px] items-center justify-center rounded-md border-3 border-black/20 bg-white bg-clip-padding"><svg class="size-6" viewBox="0 0 24 24"><circle cx="10" cy="10" r="8" fill="none" stroke="#1c1c1c" stroke-width="3.500"/><path d="M16 16L22.500 22" stroke="#1c1c1c" stroke-width="4.500"/></svg></button>

            <div class="absolute bottom-2 left-[7px] text-[16px] leading-[19px] text-[#333]">
              <div class="w-[135px] border-3 border-t-0 border-[#777] bg-white/50 px-2 pt-[3px]">3000 km</div>
              <div class="-mt-[3px] w-[146px] border-3 border-[#777] border-b-0 bg-white/50 px-2 pt-[3px]">2000 mi</div>
            </div>
            <div class="absolute right-0 bottom-0 bg-white/70 px-[7px] text-[16px] leading-[25px] whitespace-nowrap text-[#333]"><a href="#" class="text-[#0078a8]">Leaflet</a> | Map data © <a href="#" class="text-[#0078a8]">OpenStreetMap</a> contributors, <a href="#" class="text-[#0078a8]">CC-BY-SA</a>, Imagery © <a href="#" class="text-[#0078a8]">Mapbox</a></div>
          </div>
        </div>
      </section>
    </div>
  </main>
</div>
<footer class="absolute right-0 bottom-0 font-['Liberation_Sans',sans-serif] text-[15px] leading-[18px] text-[#666]">© Digital Skies - Restricted</footer>
</body>
</html>
